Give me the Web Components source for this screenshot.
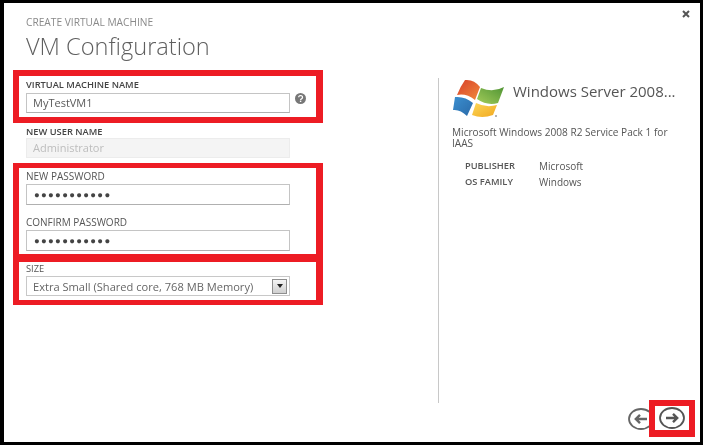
<!DOCTYPE html>
<html>
<head>
<meta charset="utf-8">
<title>VM Configuration</title>
<style>
    body { margin: 0; background: #fff; font-family: "Open Sans", "Liberation Sans", sans-serif; }
    .strong { --label-color: #444; --label-size: 9.3px; --label-weight: 600; }
</style>
</head>
<body>
<vm-dialog>
    <vm-highlight>
        <vm-field class="strong" label="VIRTUAL MACHINE NAME" style="--label-gap: 3px">
            <vm-input help>MyTestVM1</vm-input>
        </vm-field>
    </vm-highlight>
    <vm-field class="strong" label="NEW USER NAME" style="--label-gap: 1px; margin: 3px 0 5px 13px">
        <vm-input disabled>Administrator</vm-input>
    </vm-field>
    <vm-highlight style="--bw: 5px 7px 4px 6px; --pad: 3px 0 3px 7px">
        <vm-field label="NEW PASSWORD">
            <vm-input password tall>●●●●●●●●●●●</vm-input>
        </vm-field>
        <vm-field label="CONFIRM PASSWORD" style="margin-top: 12px">
            <vm-input password tall>●●●●●●●●●●●</vm-input>
        </vm-field>
    </vm-highlight>
    <vm-highlight style="--bw: 4px 7px 5px 6px; --pad: 1px 0 4px 7px">
        <vm-field label="SIZE" style="--label-size: 9.3px">
            <vm-select>Extra Small (Shared core, 768 MB Memory)</vm-select>
        </vm-field>
    </vm-highlight>
</vm-dialog>

<script>
class VmDialog extends HTMLElement {
    constructor() {
        super();
        this.attachShadow({ mode: "open" });
        this.shadowRoot.innerHTML = `
            <style>
                :host {
                    display: flex;
                    box-sizing: border-box;
                    width: 703px;
                    height: 445px;
                    border-style: solid;
                    border-color: #000;
                    border-width: 3px 3px 3px 4px;
                    background: #fff;
                    color: #555;
                    filter: blur(0.4px);
                }
                #left {
                    width: 434px;
                    flex: none;
                    padding-left: 9px;
                    box-sizing: border-box;
                }
                header {
                    height: 67px;
                    padding: 14px 0 0 13px;
                    box-sizing: border-box;
                }
                .eyebrow {
                    font-size: 10.2px;
                    line-height: 11px;
                    color: #8a8a8a;
                }
                h1 {
                    margin: 3px 0 0;
                    font-size: 23.6px;
                    line-height: 30px;
                    font-weight: 300;
                    color: #5f5f5f;
                }
                #right {
                    flex: 1;
                    display: flex;
                    flex-direction: column;
                }
                #close {
                    height: 75px;
                    display: flex;
                    justify-content: flex-end;
                    padding: 7px 10px 0 0;
                    box-sizing: border-box;
                }
                #close svg { width: 8px; height: 8px; }
            </style>
            <div id="left">
                <header>
                    <div class="eyebrow">CREATE VIRTUAL MACHINE</div>
                    <h1>VM Configuration</h1>
                </header>
                <slot></slot>
            </div>
            <div id="right">
                <div id="close">
                    <svg viewBox="0 0 8 8"><path d="M1 1L7 7M7 1L1 7" stroke="#555" stroke-width="2"/></svg>
                </div>
                <vm-summary></vm-summary>
                <vm-nav></vm-nav>
            </div>
        `;
    }
}

class VmHighlight extends HTMLElement {
    constructor() {
        super();
        this.attachShadow({ mode: "open" });
        this.shadowRoot.innerHTML = `
            <style>
                :host {
                    display: block;
                    width: 310px;
                    box-sizing: border-box;
                    border-style: solid;
                    border-color: #ed1c24;
                    border-width: var(--bw, 6px 7px 6px 6px);
                    padding: var(--pad, 3px 0 4px 7px);
                }
            </style>
            <slot></slot>
        `;
    }
}

class VmField extends HTMLElement {
    constructor() {
        super();
        this.attachShadow({ mode: "open" });
        this.shadowRoot.innerHTML = `
            <style>
                :host { display: block; }
                label {
                    display: block;
                    height: 11px;
                    margin-bottom: var(--label-gap, 2px);
                    font-size: var(--label-size, 10px);
                    line-height: 11px;
                    font-weight: var(--label-weight, 400);
                    color: var(--label-color, #555);
                }
            </style>
            <label></label>
            <slot></slot>
        `;
    }

    connectedCallback() {
        this.shadowRoot.querySelector("label").textContent = this.getAttribute("label");
    }
}

class VmInput extends HTMLElement {
    constructor() {
        super();
        this.attachShadow({ mode: "open" });
        this.shadowRoot.innerHTML = `
            <style>
                :host {
                    display: flex;
                    align-items: flex-start;
                }
                #box {
                    width: 264px;
                    height: 20px;
                    box-sizing: border-box;
                    border: 1px solid #c4c4c4;
                    border-bottom-color: #b0b0b0;
                    padding-left: 6px;
                    font-size: 11px;
                    line-height: 18px;
                    color: #5a5a5a;
                    background: #fff;
                }
                :host([tall]) #box { height: 21px; line-height: 19px; }
                :host([disabled]) #box {
                    background: #f4f4f4;
                    border-color: #ececec;
                    color: #bdbdbd;
                }
                :host([password]) #box {
                    padding-left: 7px;
                    font-size: 9.5px;
                    letter-spacing: 1.3px;
                    color: #444;
                }
                svg { display: none; width: 11px; height: 11px; margin: 0 0 0 5px; }
                :host([help]) svg { display: block; }
            </style>
            <div id="box"><slot></slot></div>
            <svg viewBox="0 0 11 11">
                <circle cx="5.5" cy="5.5" r="5.5" fill="#777"/>
                <path d="M3.7 4.2a1.9 1.7 0 1 1 2.9 1.5c-.7.4-1 .7-1 1.3" fill="none" stroke="#fff" stroke-width="1.3"/>
                <rect x="4.9" y="7.6" width="1.4" height="1.4" fill="#fff"/>
            </svg>
        `;
    }
}

class VmSelect extends HTMLElement {
    constructor() {
        super();
        this.attachShadow({ mode: "open" });
        this.shadowRoot.innerHTML = `
            <style>
                :host {
                    display: flex;
                    align-items: center;
                    justify-content: space-between;
                    width: 264px;
                    height: 20px;
                    box-sizing: border-box;
                    border: 1px solid #c8c8c8;
                    padding: 0 2px 0 6px;
                    font-size: 11.1px;
                    color: #666;
                }
                #arrow {
                    display: flex;
                    align-items: center;
                    justify-content: center;
                    width: 15px;
                    height: 15px;
                    box-sizing: border-box;
                    border: 1px solid #8e8e8e;
                    background: linear-gradient(#f4f4f4, #cfcfcf);
                }
                #arrow svg { width: 6px; height: 4px; }
            </style>
            <span><slot></slot></span>
            <div id="arrow">
                <svg viewBox="0 0 6 4"><path d="M0 0H6L3 4Z" fill="#222"/></svg>
            </div>
        `;
    }
}

class VmSummary extends HTMLElement {
    constructor() {
        super();
        this.attachShadow({ mode: "open" });
        this.shadowRoot.innerHTML = `
            <style>
                :host {
                    display: block;
                    height: 325px;
                    margin-bottom: -3px;
                    box-sizing: border-box;
                    border-left: 1px solid #c8c8c8;
                    padding-left: 13px;
                    color: #555;
                }
                #head {
                    display: flex;
                    align-items: flex-start;
                    gap: 9px;
                    height: 40px;
                }
                #head svg { width: 52px; height: 40px; flex: none; }
                h2 {
                    margin: 3px 0 0;
                    font-size: 15px;
                    line-height: 20px;
                    font-weight: 400;
                    color: #555;
                    white-space: nowrap;
                }
                p {
                    margin: 9px 0 0;
                    width: 225px;
                    font-size: 10.1px;
                    line-height: 11px;
                }
                #facts {
                    display: grid;
                    grid-template-columns: 74px auto;
                    grid-auto-rows: 16px;
                    margin: 9px 0 0 13px;
                    font-size: 10px;
                    line-height: 16px;
                }
                #facts b { font-weight: 600; font-size: 9.3px; }
            </style>
            <div id="head">
                <svg viewBox="0 0 52 40">
                    <defs>
                        <linearGradient id="r" x1="0" y1="0" x2="1" y2="1"><stop offset="0" stop-color="#d8402a"/><stop offset="1" stop-color="#f08a3c"/></linearGradient>
                        <linearGradient id="g" x1="1" y1="0" x2="0" y2="1"><stop offset="0" stop-color="#4f9434"/><stop offset="1" stop-color="#a3cc5a"/></linearGradient>
                        <linearGradient id="b" x1="0" y1="0" x2="1" y2="1"><stop offset="0" stop-color="#3b8fd0"/><stop offset="1" stop-color="#2a6aa8"/></linearGradient>
                        <linearGradient id="y" x1="0" y1="0" x2="1" y2="1"><stop offset="0" stop-color="#fbd75a"/><stop offset="1" stop-color="#f2a81e"/></linearGradient>
                    </defs>
                    <path d="M5 17Q8 9 13 2Q22 1 28 9L23 22Q14 15 5 17Z" fill="url(#r)"/>
                    <path d="M29 10Q41 15 52 9L46 25Q35 28 25 21Z" fill="url(#g)"/>
                    <path d="M3 19Q13 18 21 25L15 38Q8 31 1 32Z" fill="url(#b)"/>
                    <path d="M24 25Q34 30 45 27L41 37Q30 41 20 37Z" fill="url(#y)"/>
                    <circle cx="44" cy="38" r=".7" fill="#333"/>
                </svg>
                <h2>Windows Server 2008...</h2>
            </div>
            <p>Microsoft Windows 2008 R2 Service Pack 1 for IAAS</p>
            <div id="facts">
                <b>PUBLISHER</b><span>Microsoft</span>
                <b>OS FAMILY</b><span>Windows</span>
            </div>
        `;
    }
}

class VmNav extends HTMLElement {
    constructor() {
        super();
        this.attachShadow({ mode: "open" });
        this.shadowRoot.innerHTML = `
            <style>
                :host {
                    display: flex;
                    justify-content: flex-end;
                    align-items: center;
                    padding-right: 5px;
                }
                svg { width: 26px; height: 22px; display: block; flex: none; }
                #back { margin-right: -5px; }
                #next {
                    display: flex;
                    align-items: center;
                    justify-content: center;
                    width: 46px;
                    height: 37px;
                    box-sizing: border-box;
                    border: solid #ed1c24;
                    border-width: 6px 6px 7px 6px;
                }
            </style>
            <svg id="back" viewBox="0 0 26 22">
                <ellipse cx="13" cy="11" rx="12" ry="10" fill="none" stroke="#666" stroke-width="1.8"/>
                <path d="M19 11H8M12 6.8L7.8 11l4.200 4.200" fill="none" stroke="#666" stroke-width="2.4"/>
            </svg>
            <div id="next">
                <svg viewBox="0 0 26 22">
                    <ellipse cx="13" cy="11" rx="12" ry="10" fill="none" stroke="#555" stroke-width="1.8"/>
                    <path d="M7 11H18M14 6.800L18.200 11l-4.200 4.200" fill="none" stroke="#555" stroke-width="2.4"/>
                </svg>
            </div>
        `;
    }
}

customElements.define("vm-dialog", VmDialog);
customElements.define("vm-highlight", VmHighlight);
customElements.define("vm-field", VmField);
customElements.define("vm-input", VmInput);
customElements.define("vm-select", VmSelect);
customElements.define("vm-summary", VmSummary);
customElements.define("vm-nav", VmNav);
</script>
</body>
</html>
